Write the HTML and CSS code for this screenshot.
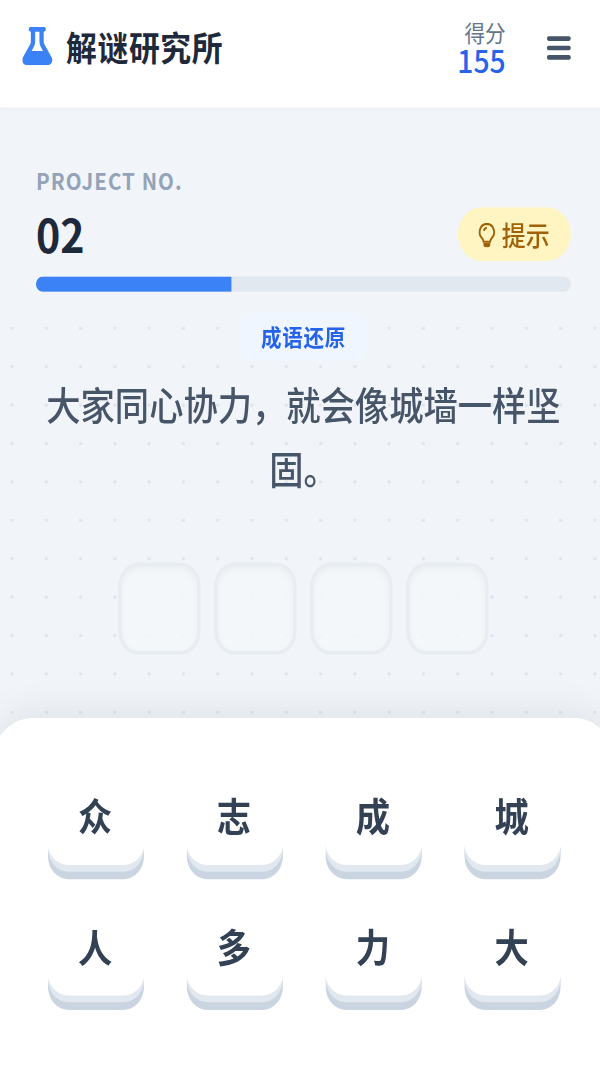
FILE: index.html
```html
<!DOCTYPE html>
<html lang="zh-CN">

<head>
    <meta charset="UTF-8">
    <meta name="viewport" content="width=device-width, initial-scale=1.0">
    <title>解谜研究所</title>
    <link rel="stylesheet" href="styles.css">
</head>

<body>
    <div class="app">
        <header class="topbar">
            <div class="brand">
                <svg class="flask" viewBox="0 0 448 512" aria-hidden="true">
                    <path d="M288 0H160 128C110.300 0 96 14.300 96 32s14.300 32 32 32V196.800c0 11.800-3.300 23.500-9.500 33.500L10.300 406.200C3.600 417.200 0 429.700 0 442.600C0 480.900 31.100 512 69.400 512H378.600c38.300 0 69.400-31.100 69.400-69.400c0-12.800-3.600-25.400-10.300-36.400L329.500 230.400c-6.200-10.100-9.500-21.700-9.500-33.500V64c17.700 0 32-14.300 32-32s-14.300-32-32-32H288zM192 196.800V64h64V196.800c0 23.700 6.600 46.900 19 67.100L309.500 320h-171L173 263.900c12.400-20.200 19-43.400 19-67.100z"/>
                </svg>
                <span class="brand-name">解谜研究所</span>
            </div>
            <div class="topbar-right">
                <div class="score">
                    <span class="score-label">得分</span>
                    <span class="score-value">155</span>
                </div>
                <svg class="menu" viewBox="0 0 14 16" aria-hidden="true">
                    <rect x="0" y="1.900" width="14" height="2.400" rx="1.200"/>
                    <rect x="0" y="6.800" width="14" height="2.400" rx="1.200"/>
                    <rect x="0" y="11.700" width="14" height="2.400" rx="1.200"/>
                </svg>
            </div>
        </header>

        <section class="status">
            <div class="status-row">
                <div>
                    <div class="project-label">PROJECT NO.</div>
                    <div class="project-number">02</div>
                </div>
                <button class="hint">
                    <svg class="bulb" viewBox="0 0 10 13" aria-hidden="true">
                        <path d="M5 .6a4.300 4.300 0 0 0-2.900 7.400c.6.600.9 1.200 1 1.900h3.800c.1-.7.400-1.300 1-1.900A4.300 4.300 0 0 0 5 .6z"/>
                        <path d="M3.300 4.200A1.900 1.900 0 0 1 5 2.600"/>
                        <path class="bulb-base" d="M3 10.500h4v.9a1.400 1.400 0 0 1-1.400 1.400H4.400A1.400 1.400 0 0 1 3 11.400z"/>
                    </svg>
                    <span>提示</span>
                </button>
            </div>
            <div class="progress">
                <div class="progress-fill"></div>
            </div>
        </section>

        <section class="puzzle">
            <span class="tag">成语还原</span>
            <p class="question">大家同心协力，就会像城墙一样坚固。</p>
            <div class="slots">
                <div class="slot"></div>
                <div class="slot"></div>
                <div class="slot"></div>
                <div class="slot"></div>
            </div>
        </section>

        <section class="sheet">
            <div class="keys">
                <button class="key">众</button>
                <button class="key">志</button>
                <button class="key">成</button>
                <button class="key">城</button>
                <button class="key">人</button>
                <button class="key">多</button>
                <button class="key">力</button>
                <button class="key">大</button>
            </div>
        </section>
    </div>
</body>

</html>
```

FILE: styles.css
```css
/* Global Styles */
html, body {
    margin: 0;
    padding: 0;
    height: 100%;
    overflow: hidden;
    background-color: #f1f5f9;
}

/* the whole page is drawn at 354 wide and stretched to the window */
.app {
    width: 354px;
    height: 556px;
    display: flex;
    flex-direction: column;
    font-family: "Noto Sans CJK SC", "Noto Sans", sans-serif;
    color: #1e293b;
    background-color: #f1f5f9;
    background-image: radial-gradient(#dfe5ee 1px, transparent 1px);
    background-size: 20px 20px;
    background-position: -3px 1px;
    transform: scale(1.7143, 1.92);
    transform-origin: 0 0;
}

button {
    font-family: inherit;
    border: none;
    cursor: pointer;
}

/* Top bar */
.topbar {
    flex: none;
    height: 56px;
    box-sizing: border-box;
    padding: 0 21px 8px 13px;
    display: flex;
    align-items: center;
    justify-content: space-between;
    background-color: #fff;
    box-shadow: 0 1px 3px rgba(0, 0, 0, 0.05);
    position: relative;
    z-index: 2;
}

.brand {
    display: flex;
    align-items: center;
    gap: 8px;
}

.flask {
    width: 17.500px;
    height: 20px;
    fill: #3b82f6;
}

.brand-name {
    font-size: 18px;
    font-weight: 700;
    line-height: 28px;
    letter-spacing: 0.35px;
    padding-bottom: 1px;
}

.topbar-right {
    display: flex;
    align-items: center;
    gap: 24px;
}

.score {
    display: flex;
    flex-direction: column;
    align-items: flex-end;
}

.score-label {
    font-size: 12px;
    line-height: 14px;
    color: #64748b;
}

.score-value {
    font-size: 16.500px;
    font-weight: 500;
    line-height: 15px;
    color: #2563eb;
}

.menu {
    width: 14px;
    height: 16px;
    fill: #475569;
    margin-top: 1px;
}

/* Project number and progress */
.status {
    flex: none;
    height: 107px;
    padding: 30px 21px 0;
    box-sizing: border-box;
    background-color: #f1f5f9;
}

.status-row {
    display: flex;
    align-items: flex-end;
    justify-content: space-between;
    margin-bottom: 8px;
}

.project-label {
    font-size: 12px;
    font-weight: 700;
    line-height: 16px;
    letter-spacing: 0.6px;
    color: #94a3b8;
}

.project-number {
    font-size: 24px;
    font-weight: 700;
    line-height: 29.500px;
    margin-top: 4.500px;
}

.hint {
    height: 28px;
    width: 66.500px;
    padding: 0;
    display: flex;
    align-items: center;
    justify-content: center;
    gap: 4px;
    font-size: 14px;
    font-weight: 500;
    color: #a16207;
    background-color: #fef5c3;
    border-radius: 14px;
}

.bulb {
    width: 10px;
    height: 13px;
    fill: none;
    stroke: #a16207;
    stroke-width: 1.100;
}

.bulb .bulb-base {
    fill: #a16207;
    stroke: none;
}

.progress {
    height: 8px;
    background-color: #e2e8f0;
    border-radius: 4px;
    overflow: hidden;
}

.progress-fill {
    width: 36.650%;
    height: 100%;
    background-color: #3b82f6;
}

/* Question */
.puzzle {
    flex: 1;
    display: flex;
    flex-direction: column;
    align-items: center;
    padding: 0 21px;
}

.tag {
    width: 73.500px;
    height: 24.500px;
    padding-bottom: 1.500px;
    box-sizing: border-box;
    display: flex;
    align-items: center;
    justify-content: center;
    font-size: 12px;
    font-weight: 700;
    letter-spacing: 0.4px;
    color: #2563eb;
    background-color: #eff6ff;
    border-radius: 6px;
}

.question {
    margin: 6px 0 0;
    font-size: 20px;
    font-weight: 500;
    line-height: 33px;
    text-align: center;
    color: #475569;
}

.slots {
    margin-top: 33.500px;
    display: flex;
    gap: 8px;
}

.slot {
    width: 48px;
    height: 48px;
    box-sizing: border-box;
    border: 2px solid #e8edf2;
    border-radius: 12px;
    background-color: rgba(244, 247, 250, 0.8);
    box-shadow: inset 0 2px 4px rgba(0, 0, 0, 0.03);
}

/* Answer keys, the sheet runs a little past both window edges */
.sheet {
    flex: none;
    height: 182px;
    margin: 0 -5.400px 0 -4.700px;
    padding-top: 28px;
    box-sizing: border-box;
    background-color: #fff;
    border-radius: 24px 24px 0 0;
    box-shadow: 0 -4px 20px rgba(0, 0, 0, 0.07);
}

.keys {
    display: grid;
    grid-template-columns: repeat(4, 56px);
    justify-content: center;
    column-gap: 25px;
    row-gap: 20px;
    padding-right: 0.700px;
}

/* the white ring hides the seam of the two lower shadows along the sides */
.key {
    height: 48px;
    padding: 0 0 4px;
    font-size: 20px;
    font-weight: 700;
    color: #334155;
    background-color: #fff;
    border-radius: 12px;
    box-shadow: 0 0 0 0.500px #fff, 0 4px 0 #e2e8f0, 0 8px 0 #cbd5e1;
}
```
